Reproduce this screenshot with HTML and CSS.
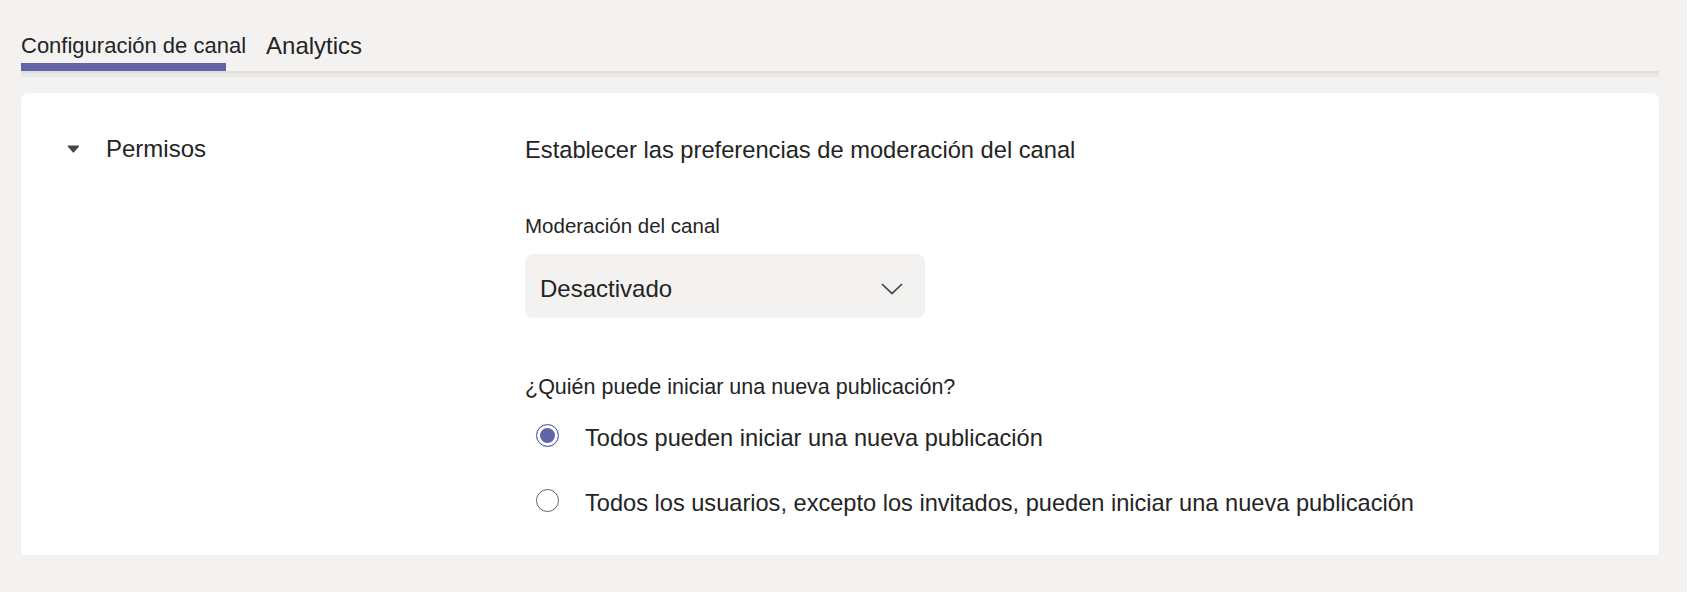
FILE: index.html
```html
<!DOCTYPE html>
<html lang="es">
<head>
    <meta charset="UTF-8">
    <meta name="viewport" content="width=device-width, initial-scale=1.0">
    <title>Configuración de canal</title>
    <link rel="stylesheet" href="styles.css">
</head>
<body>
    <div class="page">
        <!-- pestañas -->
        <nav class="tabs">
            <a href="#" class="tab tab-active">Configuración de canal</a>
            <a href="#" class="tab tab-analytics">Analytics</a>
        </nav>

        <!-- tarjeta de permisos -->
        <section class="card">
            <div class="card-side">
                <svg class="caret" width="13" height="8" viewBox="0 0 13 8">
                    <path d="M1.5 1.2 H11.3 L6.4 6.8 Z" fill="#484644" stroke="#484644" stroke-width="1.6" stroke-linejoin="round"/>
                </svg>
                <span class="side-title">Permisos</span>
            </div>

            <div class="card-main">
                <h2 class="main-title">Establecer las preferencias de moderación del canal</h2>

                <label class="field-label">Moderación del canal</label>
                <div class="select">
                    <span>Desactivado</span>
                    <svg width="22" height="12" viewBox="0 0 22 12">
                        <polyline points="1,1 11,10.5 21,1" fill="none" stroke="#424242" stroke-width="1.7"/>
                    </svg>
                </div>

                <p class="question">¿Quién puede iniciar una nueva publicación?</p>
                <label class="radio">
                    <span class="radio-dot radio-checked"></span>
                    Todos pueden iniciar una nueva publicación
                </label>
                <label class="radio">
                    <span class="radio-dot"></span>
                    Todos los usuarios, excepto los invitados, pueden iniciar una nueva publicación
                </label>
            </div>
        </section>
    </div>
</body>
</html>
```

FILE: styles.css
```css
body {
    margin: 0;
    background-color: #fff;
    font-family: "Liberation Sans", Arial, sans-serif;
    color: #242424;
}
.page {
    width: 1687px;
    height: 592px;
    box-sizing: border-box;
    padding: 0 28px 0 21px;
    background-color: #f3f2f1;
    overflow: hidden;
}

/* pestañas */
.tabs {
    display: flex;
    align-items: flex-end;
    gap: 20px;
    height: 71px;
    border-bottom: 2px solid #e1dfdd;
    box-shadow: 0 4px 0 #ebe9e7;
}
.tab {
    position: relative;
    padding-bottom: 13px;
    line-height: 25px;
    font-size: 22px;
    color: #242424;
    text-decoration: none;
}
.tab-analytics {
    font-size: 24px;
}
.tab-active::after {
    content: "";
    position: absolute;
    left: 0;
    bottom: 0;
    width: 205px;
    height: 8px;
    background-color: #6264a7;
}

/* tarjeta */
.card {
    display: flex;
    height: 462px;
    margin-top: 20px;
    background-color: #fff;
    border-radius: 8px 8px 0 0;
    overflow: hidden;
}
.card-side {
    width: 504px;
    box-sizing: border-box;
    padding: 42px 0 0 46px;
    display: flex;
    align-items: flex-start;
    gap: 26px;
}
.caret {
    margin-top: 10px;
}
.side-title {
    font-size: 24px;
    line-height: 28px;
}
.card-main {
    flex: 1;
    padding-top: 43px;
}
.main-title {
    margin: 0 0 50px;
    font-size: 23.7px;
    font-weight: normal;
    line-height: 28px;
}
.field-label {
    display: block;
    font-size: 20.5px;
    line-height: 24px;
}
.select {
    display: flex;
    align-items: center;
    justify-content: space-between;
    width: 400px;
    height: 64px;
    box-sizing: border-box;
    margin-top: 16px;
    padding: 6px 22px 0 15px;
    background-color: #f3f2f1;
    border-radius: 8px;
    font-size: 24px;
    line-height: 28px;
}
.question {
    margin: 56px 0 22px;
    font-size: 21.5px;
    line-height: 26px;
}
.radio {
    display: flex;
    align-items: flex-start;
    gap: 26px;
    margin: 0 0 33px 11px;
    font-size: 23.6px;
    line-height: 32px;
}
.radio-dot {
    flex: none;
    width: 23px;
    height: 23px;
    box-sizing: border-box;
    margin-top: 2px;
    border: 1.5px solid #616161;
    border-radius: 50%;
}
.radio-checked {
    border-color: #6264a7;
    background-color: #6264a7;
    box-shadow: inset 0 0 0 3px #fff;
}
```
